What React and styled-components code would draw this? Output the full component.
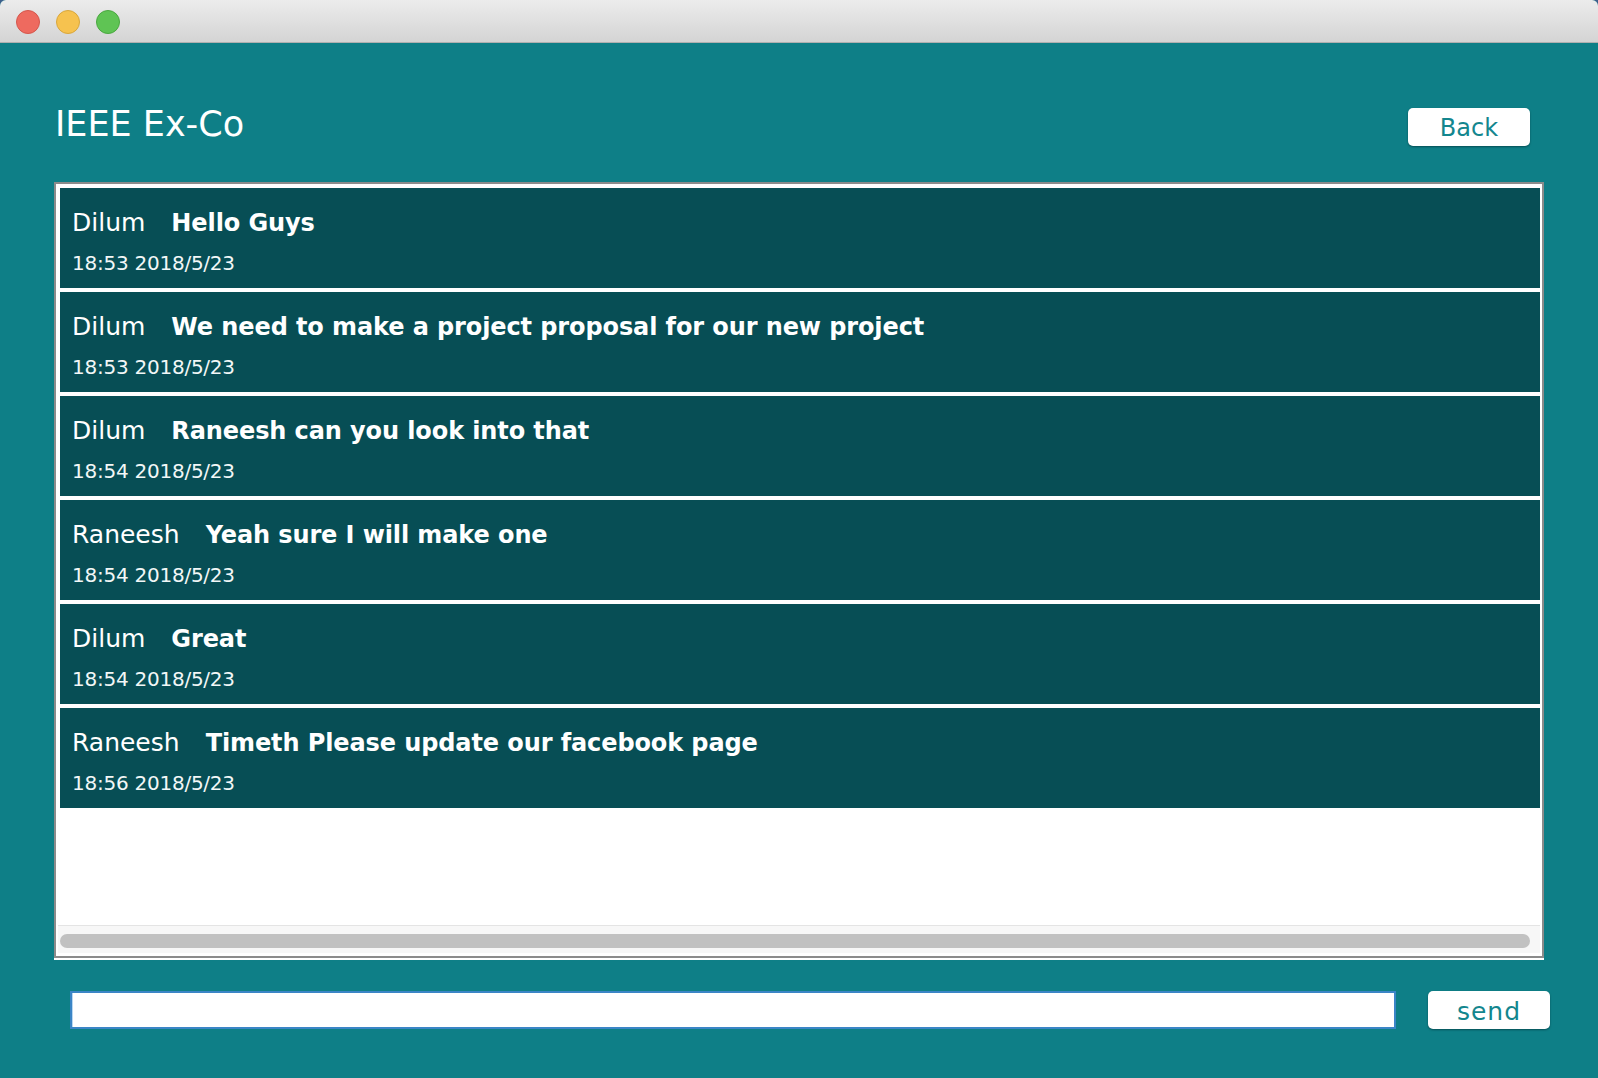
import React from "react";
import styled, { createGlobalStyle } from "styled-components";

const Global = createGlobalStyle`
  html, body { margin: 0; padding: 0; background: #3d5f8c; }
  body { font-family: "DejaVu Sans", "Liberation Sans", sans-serif; }
  * { box-sizing: border-box; }
`;

const Window = styled.div`
  width: 1598px;
  height: 1078px;
  display: flex;
  flex-direction: column;
  background: #0e7f87;
  border-radius: 6px 6px 0 0;
  overflow: hidden;
`;

const TitleBar = styled.div`
  height: 43px;
  flex: none;
  display: flex;
  align-items: center;
  gap: 16px;
  padding: 1px 0 0 16px;
  background: linear-gradient(#ececec, #d4d4d4);
  border-bottom: 1px solid #b0b0b0;
`;

const Light = styled.span`
  width: 24px;
  height: 24px;
  border-radius: 50%;
  background: ${(p) => p.$fill};
  border: 1px solid ${(p) => p.$edge};
`;

const Content = styled.div`
  flex: 1;
  display: flex;
  flex-direction: column;
  padding: 65px 54px 0 54px;
`;

const Header = styled.div`
  display: flex;
  align-items: flex-start;
  justify-content: space-between;
  padding-left: 1px;
  padding-right: 14px;
  height: 38px;
`;

const Title = styled.h1`
  margin: -3px 0 0 0;
  font-size: 35px;
  line-height: 38px;
  font-weight: normal;
  color: #ffffff;
`;

const PillButton = styled.button`
  width: 122px;
  height: 38px;
  flex: none;
  border: none;
  border-radius: 5px;
  background: #ffffff;
  color: #13868e;
  font-family: "DejaVu Sans", sans-serif;
  font-size: ${(p) => p.$size || 24}px;
  letter-spacing: ${(p) => p.$spacing || 0}px;
  padding: 2px 0 0 0;
  box-shadow: 0 1px 2px rgba(0, 40, 45, 0.55);
  cursor: pointer;
`;

const Panel = styled.div`
  margin-top: 36px;
  height: 776px;
  display: flex;
  flex-direction: column;
  background: #ffffff;
  border: 2px solid #8b8b8b;
  box-shadow: 0 2px 0 #ffffff;
`;

const Viewport = styled.div`
  flex: 1;
  display: flex;
  flex-direction: column;
  gap: 4px;
  padding: 4px 2px 0 4px;
  overflow: hidden;
`;

const Row = styled.div`
  height: 100px;
  flex: none;
  background: #074e55;
  padding: 20px 12px 0 12px;
  color: #ffffff;
`;

const Line = styled.div`
  display: flex;
  align-items: baseline;
  gap: 26px;
  font-size: 25px;
  line-height: 30px;
  white-space: nowrap;
`;

const Sender = styled.span`
  font-weight: normal;
`;

const Message = styled.span`
  font-weight: bold;
  font-size: 24px;
  letter-spacing: -0.1px;
`;

const Stamp = styled.div`
  margin-top: 13px;
  font-size: 20px;
  line-height: 24px;
  letter-spacing: -0.25px;
  color: #f2f7f7;
`;

const ScrollTrack = styled.div`
  height: 31px;
  flex: none;
  margin: 0 2px;
  padding: 8px 10px 0 2px;
  background: #f7f7f7;
  border-top: 1px solid #e4e4e4;
  border-bottom: 3px solid #ffffff;
`;

const Thumb = styled.div`
  height: 14px;
  border-radius: 7px;
  background: #c1c1c1;
`;

const Composer = styled.div`
  margin: 33px -6px 0 0;
  display: flex;
  align-items: center;
  padding: 0 0 0 16px;
  gap: 32px;
`;

const Input = styled.input`
  flex: 1;
  min-width: 0;
  height: 38px;
  border: 2px solid #3b85c6;
  box-shadow: inset 1px 0 0 #b9d7f1;
  background: #ffffff;
  outline: none;
  font-size: 20px;
  font-family: "DejaVu Sans", sans-serif;
  padding: 0 8px;
`;

const messages = [
  { from: "Dilum", text: "Hello Guys", time: "18:53 2018/5/23" },
  { from: "Dilum", text: "We need to make a project proposal for our new project", time: "18:53 2018/5/23" },
  { from: "Dilum", text: "Raneesh can you look into that", time: "18:54 2018/5/23" },
  { from: "Raneesh", text: "Yeah sure I will make one", time: "18:54 2018/5/23" },
  { from: "Dilum", text: "Great", time: "18:54 2018/5/23" },
  { from: "Raneesh", text: "Timeth Please update our facebook page", time: "18:56 2018/5/23" },
];

export default function App() {
  return (
    <>
      <Global />
      <Window>
        <TitleBar>
          <Light $fill="#ee6a5f" $edge="#d5564c" />
          <Light $fill="#f6c24f" $edge="#d9a73c" />
          <Light $fill="#5fc454" $edge="#4aa840" />
        </TitleBar>
        <Content>
          <Header>
            <Title>IEEE Ex-Co</Title>
            <PillButton $size={24}>Back</PillButton>
          </Header>
          <Panel>
            <Viewport>
              {messages.map((m, i) => (
                <Row key={i}>
                  <Line>
                    <Sender>{m.from}</Sender>
                    <Message>{m.text}</Message>
                  </Line>
                  <Stamp>{m.time}</Stamp>
                </Row>
              ))}
            </Viewport>
            <ScrollTrack>
              <Thumb />
            </ScrollTrack>
          </Panel>
          <Composer>
            <Input type="text" />
            <PillButton $size={25} $spacing={1}>send</PillButton>
          </Composer>
        </Content>
      </Window>
    </>
  );
}
